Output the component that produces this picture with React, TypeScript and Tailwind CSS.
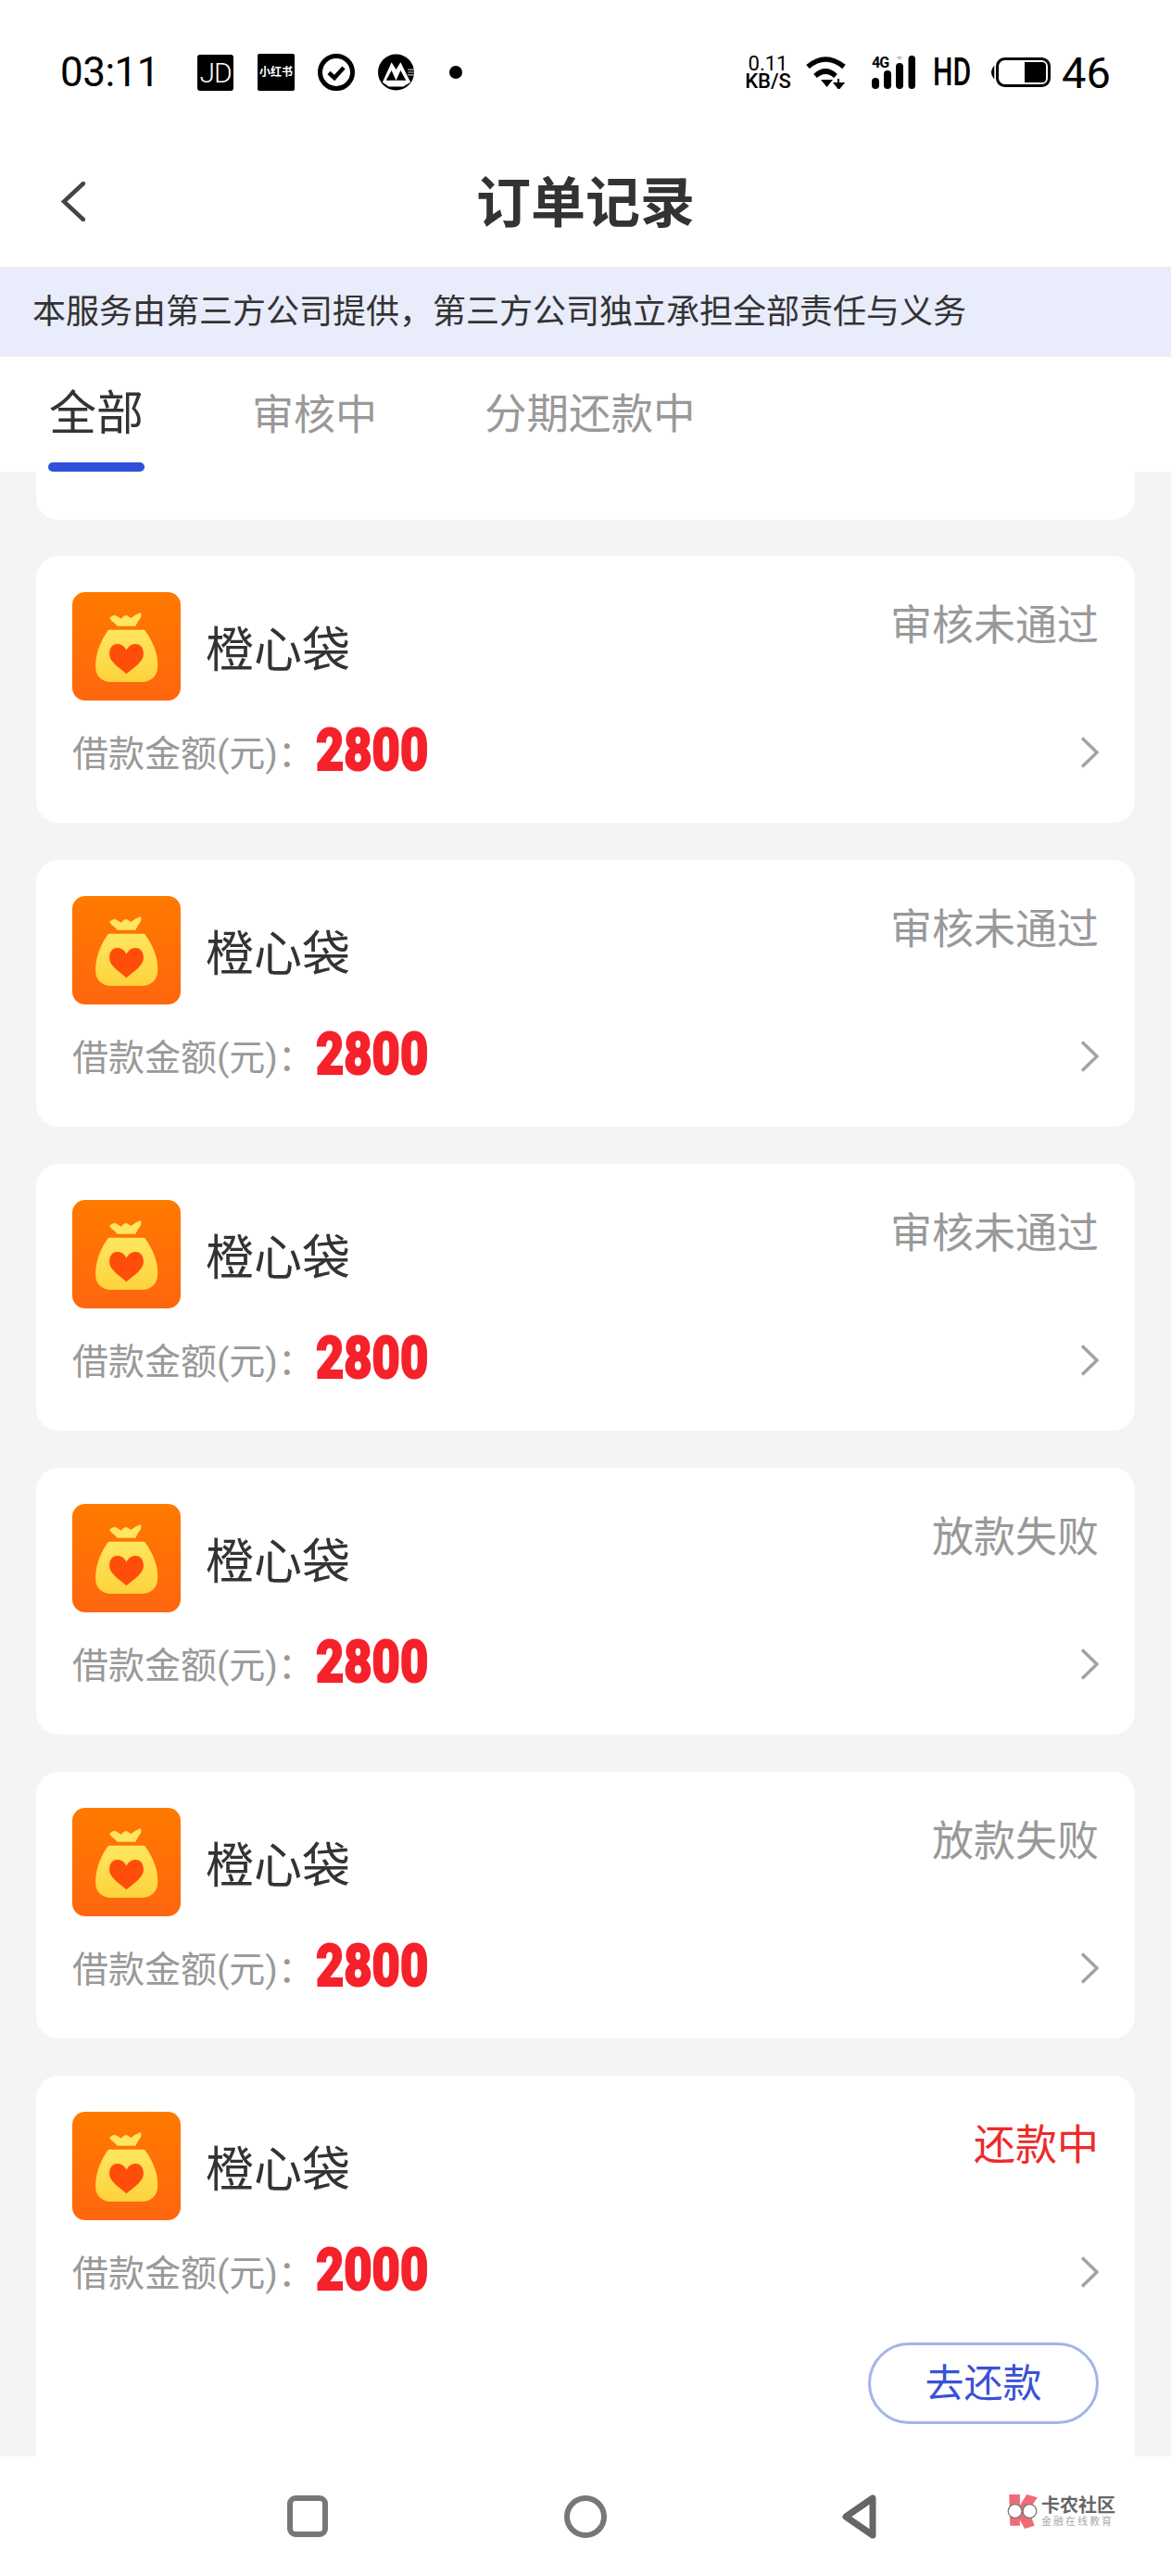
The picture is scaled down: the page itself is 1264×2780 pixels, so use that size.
const orders = [
  { status: "审核未通过", amount: "2800" },
  { status: "审核未通过", amount: "2800" },
  { status: "审核未通过", amount: "2800" },
  { status: "放款失败", amount: "2800" },
  { status: "放款失败", amount: "2800" },
  { status: "还款中", amount: "2000", repaying: true },
];

function BagIcon() {
  return (
    <svg viewBox="0 0 350 350" className="w-[117px] h-[117px] shrink-0 rounded-[14px]">
      <defs>
        <linearGradient id="bagBg" x1="0" y1="0" x2="0" y2="1">
          <stop offset="0" stopColor="#FF7A00" />
          <stop offset="1" stopColor="#FF660F" />
        </linearGradient>
        <linearGradient id="bagBody" x1="0" y1="0" x2="0" y2="1">
          <stop offset="0" stopColor="#FFE65F" />
          <stop offset="1" stopColor="#FFD23C" />
        </linearGradient>
      </defs>
      <rect width="350" height="350" fill="url(#bagBg)" />
      <path d="M120 84 Q130 72 142 76 L158 86 Q168 72 178 76 L190 84 Q205 72 220 66 Q228 78 214 92 L204 110 H146 L134 98 Q124 92 120 84Z" fill="#FFE65F" />
      <path d="M117 122 H233 C255 150 278 195 276 240 C275 275 250 290 225 290 H125 C100 290 75 275 75 240 C75 195 95 150 117 122Z" fill="url(#bagBody)" />
      <path d="M175 188 C165 162 120 156 120 200 C120 225 150 243 175 264 C200 243 230 225 230 200 C230 156 185 162 175 188Z" fill="#FF4D0A" />
    </svg>
  );
}

function StatusBar() {
  return (
    <div className="flex items-center h-[156px] pl-[65px] pr-[66px] text-black">
      <span className="w-[102px] text-[44px] leading-none tracking-[-0.5px]">03:11</span>
      <span className="ml-[46px] w-[39px] h-[39px] rounded-[3px] bg-black text-white text-[30px] leading-[39px] text-center font-light tracking-[-1px]">JD</span>
      <span className="ml-[26px] w-[40px] h-[40px] rounded-[2px] bg-black text-white text-[12px] leading-[40px] text-center font-bold whitespace-nowrap">小红书</span>
      <svg viewBox="0 0 40 40" className="ml-[25px] w-[40px] h-[40px]">
        <circle cx="20" cy="20" r="17.5" fill="none" stroke="#000" strokeWidth="5" />
        <path d="M12 20.5 L18 26 L28 15" fill="none" stroke="#000" strokeWidth="4.5" />
      </svg>
      <svg viewBox="0 0 40 40" className="ml-[25px] w-[39px] h-[40px]">
        <circle cx="20" cy="20" r="20" fill="#000" />
        <path d="M5 31 L15 9 L20 17 L25 9 L34 27 L36 31 L28 36 H12Z" fill="#fff" />
        <path d="M9 29 L15 18 L20 29Z M20 29 L25 18 L31 29Z" fill="#000" />
        <path d="M33 17H40M33 20H40M33 23H40" stroke="#bbb" strokeWidth="1.2" />
      </svg>
      <span className="ml-[38px] w-[14px] h-[14px] rounded-full bg-black" />

      <div className="ml-auto w-[50px] flex flex-col items-center text-[22px] leading-[19px] font-medium">
        <span className="font-normal">0.11</span>
        <span className="whitespace-nowrap">KB/S</span>
      </div>
      <svg viewBox="0 0 45 36" className="ml-[15px] w-[45px] h-[36px]">
        <path d="M3 12 Q22 -4 42 12" fill="none" stroke="#000" strokeWidth="5.5" />
        <path d="M11 22 Q22 12 33 22" fill="none" stroke="#000" strokeWidth="5.5" />
        <path d="M17 26 H30 L23.5 34Z" fill="#000" />
        <path d="M36 25 V31 M32 30 H41 L36.5 35.5Z" fill="#000" stroke="#000" strokeWidth="2" />
      </svg>
      <div className="relative ml-[27px] w-[48px] h-[36px]">
        <span className="absolute left-0 top-[1px] text-[16px] leading-[13px] font-bold tracking-[-1px]">4G</span>
        <svg viewBox="0 0 48 36" className="w-[48px] h-[36px]">
          <rect x="0" y="24" width="8" height="12" rx="4" fill="#000" />
          <rect x="13" y="16" width="8" height="20" rx="4" fill="#000" />
          <rect x="26" y="8" width="8" height="28" rx="4" fill="#000" />
          <rect x="39.5" y="0" width="7.5" height="36" rx="3.7" fill="#000" />
          <path d="M27 1 H33 L30 5Z" fill="#bbb" />
        </svg>
      </div>
      <span className="ml-[18px] w-[40px] text-[42px] leading-none font-medium origin-left scale-x-[0.72]">HD</span>
      <svg viewBox="0 0 65 32" className="ml-[22px] w-[65px] h-[32px]">
        <path d="M3.5 11 Q0 16 3.5 21Z" fill="#000" stroke="#000" strokeWidth="1.5" />
        <rect x="7.5" y="1.5" width="56" height="29" rx="8" fill="none" stroke="#000" strokeWidth="3" />
        <path d="M37 5 H56 Q60 5 60 9 V23 Q60 27 56 27 H37Z" fill="#000" />
      </svg>
      <span className="ml-[12px] w-[52px] text-[47px] leading-none">46</span>
    </div>
  );
}

function OrderCard({ status, amount, repaying }: { status: string; amount: string; repaying?: boolean }) {
  return (
    <div className={`shrink-0 bg-white rounded-[24px] pt-[39px] px-[39px] ${repaying ? "h-[440px]" : "h-[288px]"}`}>
      <div className="flex h-[117px]">
        <BagIcon />
        <span className="ml-[27px] mt-[5px] text-[52px] leading-[117px] text-[#333]">橙心袋</span>
        <span className={`ml-auto mt-[4px] text-[45px] leading-[66px] ${repaying ? "text-[#EE2A2A]" : "text-[#999]"}`}>
          {status}
        </span>
      </div>
      <div className="flex items-center h-[76px] mt-[20px]">
        <span className="w-[263px] whitespace-nowrap text-[39px] leading-none text-[#999]">借款金额(元)：</span>
        <span className="-mt-[9px] text-[63px] leading-none font-black text-[#F5212B] origin-left scale-x-[0.83] [-webkit-text-stroke:2px_#F5212B]">
          {amount}
        </span>
        <svg viewBox="0 0 20 34" className="ml-auto w-[20px] h-[34px] -mt-[5px]">
          <path d="M2 1.5 L18 17 L2 32.5" fill="none" stroke="#A3A3A3" strokeWidth="3.5" />
        </svg>
      </div>
      {repaying && (
        <div className="flex justify-end mt-[36px]">
          <button className="w-[249px] h-[88px] rounded-full border-[3px] border-[#A4B3EA] bg-white text-[42px] text-[#3A52D6]">
            去还款
          </button>
        </div>
      )}
    </div>
  );
}

function Watermark() {
  return (
    <div className="absolute left-[1085px] top-[40px] flex items-center gap-[3px]">
      <svg viewBox="0 0 34 36" className="w-[36px] h-[38px]">
        <path d="M4 1 H15 V12 L22 1 L33 4 L24 17 L30 33 L20 36 L15 27 V33 L5 33Z" fill="#EE6B78" />
        <circle cx="10" cy="18" r="7" fill="#fff" stroke="#777" strokeWidth="1.2" />
        <circle cx="25" cy="18" r="7" fill="#fff" stroke="#777" strokeWidth="1.2" />
      </svg>
      <div className="flex flex-col">
        <span className="text-[20px] leading-[22px] font-bold text-[#666] whitespace-nowrap">卡农社区</span>
        <span className="text-[11px] leading-[13px] tracking-[2px] text-[#aaa] whitespace-nowrap">金融在线教育</span>
      </div>
    </div>
  );
}

export default function App() {
  return (
    <div className="w-[1264px] h-[2780px] flex flex-col overflow-hidden bg-white font-['Roboto','Noto_Sans_CJK_SC',sans-serif]">
      <StatusBar />

      {/* Header */}
      <div className="relative flex items-center justify-center h-[132px] pb-[6px]">
        <svg viewBox="0 0 26 43" className="absolute left-[66px] top-[40px] w-[26px] h-[43px]">
          <path d="M24 2 L3 21.5 L24 41" fill="none" stroke="#444" strokeWidth="4.5" strokeLinecap="round" />
        </svg>
        <h1 className="text-[59px] leading-none font-bold text-[#333]">订单记录</h1>
      </div>

      <div className="flex items-center h-[97px] pl-[35px] bg-[#E9ECFB] text-[36px] leading-none text-[#333]">
        本服务由第三方公司提供，第三方公司独立承担全部责任与义务
      </div>

      {/* Tabs */}
      <div className="flex h-[124px] pl-[52px] bg-white">
        <div className="flex flex-col w-[104px]">
          <span className="flex-1 flex items-center justify-center pt-[10px] text-[51px] text-[#333]">全部</span>
          <span className="h-[10px] rounded-full bg-[#2F50DB]" />
        </div>
        <span className="ml-[116px] pt-[13px] flex items-center h-[114px] text-[45px] text-[#999]">审核中</span>
        <span className="ml-[116px] pt-[13px] flex items-center h-[114px] text-[45.5px] text-[#999]">分期还款中</span>
      </div>

      {/* List */}
      <div className="flex-1 min-h-0 overflow-hidden bg-[#F4F4F4] px-[39px] flex flex-col gap-[40px]">
        <div className="shrink-0 h-[52px] -mb-[1px] bg-white rounded-b-[24px]" />
        {orders.map((o, i) => (
          <OrderCard key={i} status={o.status} amount={o.amount} repaying={o.repaying} />
        ))}
      </div>

      {/* Nav bar */}
      <div className="relative shrink-0 flex items-center h-[129px] pl-[310px] bg-white">
        <span className="w-[44px] h-[45px] rounded-[9px] border-[6px] border-[#777]" />
        <span className="ml-[255px] w-[46px] h-[46px] rounded-full border-[6px] border-[#777]" />
        <svg viewBox="0 0 38 48" className="ml-[254px] w-[38px] h-[48px]">
          <path d="M33 4 V44 L4 24Z" fill="none" stroke="#666" strokeWidth="7" strokeLinejoin="round" />
        </svg>
        <Watermark />
      </div>
    </div>
  );
}
